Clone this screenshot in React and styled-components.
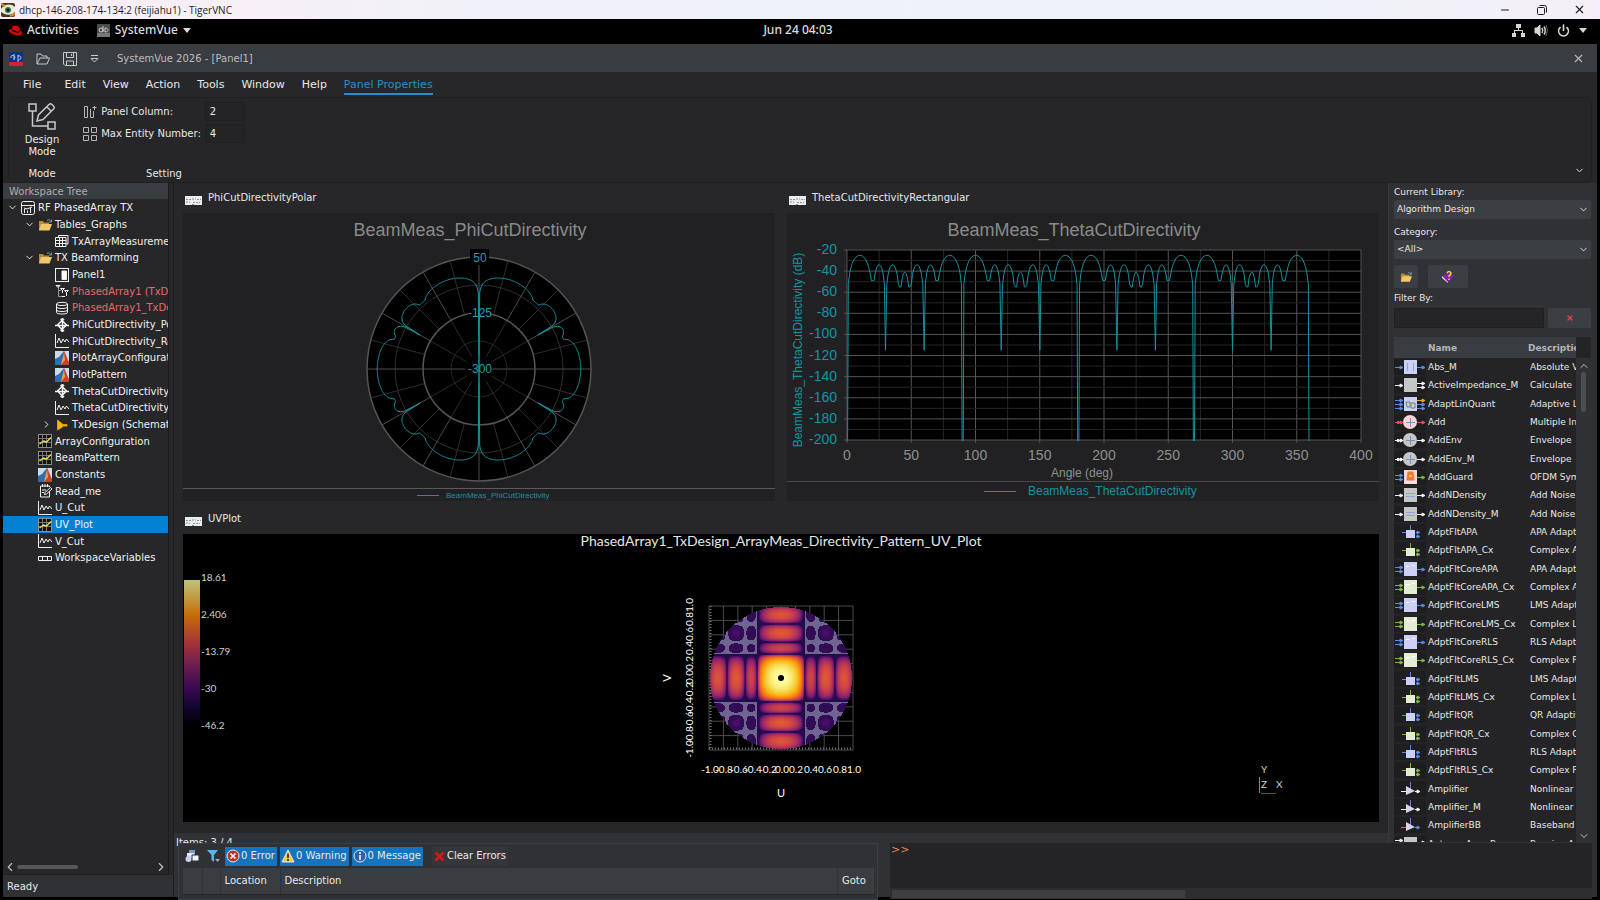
import React, { useState } from 'react';
import styled, { createGlobalStyle } from 'styled-components';
import { ChevronDown, ChevronLeft, ChevronRight, ChevronUp, Minus, Power, X } from 'lucide-react';
import { FaRedhat } from 'react-icons/fa';

const GlobalStyle = createGlobalStyle`
  * { box-sizing: border-box; }
  html, body, #root { height: 100%; margin: 0; }
  body {
    background: #000;
    color: #e8e8e8;
    font: 10px/16px "DejaVu Sans", sans-serif;
    overflow: hidden;
  }
  button, input, select { font: inherit; color: inherit; margin: 0; }
  button { border: 0; background: none; padding: 0; }
  svg { display: block; flex: none; }
`;

const Screen = styled.div`
  height: 100vh;
  display: flex;
  flex-direction: column;
`;

/* ---------- VNC and desktop bars ---------- */

const VncBar = styled.header`
  height: 19px;
  flex: none;
  display: flex;
  align-items: center;
  gap: 4px;
  padding: 0 14px 0 1px;
  color: #1c1c1c;
  background: linear-gradient(90deg, #fbeef4, #f1f1f9 30%, #eef3f9 75%, #f4eff8);
  font: 10px/16px "Open Sans", sans-serif;
`;

const VncButtons = styled.div`
  margin-left: auto;
  display: flex;
  gap: 25px;
`;

const GnomeBar = styled.nav`
  height: 25px;
  flex: none;
  display: grid;
  grid-template-columns: 1fr auto 1fr;
  align-items: center;
  padding: 0 13px 3px 9px;
  color: #dcdcdc;
  font: 500 12px/18px "Noto Sans", sans-serif;
`;

const GnomeGroup = styled.div`
  display: flex;
  align-items: center;
  justify-content: ${(p) => (p.$end ? 'flex-end' : 'flex-start')};
  gap: ${(p) => (p.$end ? '9px' : '18px')};
`;

const GnomeItem = styled.button`
  display: flex;
  align-items: center;
  gap: 5px;
`;

/* ---------- Application window ---------- */

const AppWindow = styled.div`
  flex: 1;
  min-height: 0;
  margin: 0 3px 3px;
  display: flex;
  flex-direction: column;
  background: #272729;
`;

const TitleBar = styled.div`
  height: 28px;
  flex: none;
  display: flex;
  align-items: center;
  padding: 1px 12px 0 6px;
  background: #393c40;
  color: #bcbec0;
`;

const QuickTools = styled.div`
  display: flex;
  align-items: center;
  gap: 13px;
  margin-right: 18px;
`;

const AppTitle = styled.div`
  flex: 1;
`;

const MenuBar = styled.nav`
  height: 25px;
  flex: none;
  display: flex;
  align-items: flex-start;
  gap: 17px;
  padding: 4px 20px 0;
  font-size: 11px;
`;

const MenuItem = styled.button`
  height: 19px;
  padding-right: ${(p) => (p.$wide ? '6px' : '0')};
  color: ${(p) => (p.$active ? '#2a8cc8' : '#e8e8e8')};
  border-bottom: 2px solid ${(p) => (p.$active ? '#2a8cc8' : 'transparent')};
`;

const Ribbon = styled.section`
  height: 86px;
  flex: none;
  margin: 0 5px;
  display: flex;
  align-items: stretch;
  border: 1px solid #202022;
  border-radius: 6px;
  background: #262628;
`;

const RibbonGroup = styled.div`
  display: flex;
  flex-direction: column;
  align-items: center;
  padding: 4px 0 0;
  width: ${(p) => p.$w}px;
`;

const RibbonLabel = styled.div`
  margin-top: auto;
`;

const DesignButton = styled.button`
  display: flex;
  flex-direction: column;
  align-items: center;
  gap: 4px;
  line-height: 12px;
`;

const Fields = styled.div`
  display: grid;
  grid-template-columns: 14px auto 40px;
  align-items: center;
  column-gap: 4px;
  row-gap: 3px;
`;

const FieldInput = styled.input`
  width: 40px;
  height: 19px;
  padding: 0 4px;
  background: #242426;
  border: 1px solid #202022;
  border-radius: 2px;
`;

const RibbonEnd = styled.button`
  margin: auto 6px 6px auto;
`;

const Body = styled.div`
  flex: 1;
  min-height: 0;
  display: flex;
`;

/* ---------- Workspace tree ---------- */

const LeftColumn = styled.aside`
  width: 170px;
  flex: none;
  display: flex;
  flex-direction: column;
`;

const Dock = styled.div`
  flex: 1;
  min-height: 0;
  width: 166px;
  overflow: hidden;
  display: flex;
  flex-direction: column;
  border-right: 1px solid #1d1d1f;
  border-bottom: 1px solid #1d1d1f;
`;

const DockHeader = styled.h2`
  height: 16px;
  margin: 0;
  padding-left: 6px;
  background: #393c40;
  color: #acaeb0;
  font: 10px/17px "DejaVu Sans", sans-serif;
`;

const Tree = styled.ul`
  flex: 1;
  margin: 0;
  padding: 0;
  list-style: none;
`;

const TreeRow = styled.li`
  height: 17px;
  display: flex;
  align-items: center;
  padding-left: ${(p) => 1 + p.$level * 17}px;
  white-space: nowrap;
  line-height: 17px;
  color: ${(p) => (p.$error ? '#e86a70' : '#f0f0f0')};
  background: ${(p) => (p.$selected ? '#0480d4' : 'transparent')};

  &:nth-child(3n) { height: 16px; }
`;

const Twisty = styled.span`
  width: 17px;
  flex: none;
  display: flex;
  justify-content: center;
`;

const TreeLabel = styled.span`
  padding-left: 3px;
`;

const HScroll = styled.div`
  height: 14px;
  display: flex;
  align-items: center;
  color: #c0c0c0;
`;

const HThumb = styled.div`
  width: 61px;
  height: 4px;
  margin-right: auto;
  border-radius: 2px;
  background: #55575a;
`;

const Ready = styled.div`
  height: 22px;
  flex: none;
  padding-left: 4px;
  line-height: 24px;
  background: #2f3135;
`;

/* ---------- Panel area ---------- */

const Center = styled.main`
  flex: 1;
  min-width: 0;
  display: flex;
  flex-direction: column;
  border-left: 1px solid #1f1f21;
`;

const PanelGrid = styled.div`
  display: grid;
  grid-template-columns: 1fr 1fr;
  column-gap: 12px;
  row-gap: 3px;
  padding: 0 9px 11px 9px;
`;

const Panel = styled.section`
  grid-column: ${(p) => (p.$wide ? '1 / -1' : 'auto')};
  min-width: 0;
`;

const PanelTitle = styled.h3`
  height: 30px;
  margin: 0;
  display: flex;
  align-items: flex-start;
  gap: 6px;
  padding: 7px 0 0 2px;
  font: 10px/16px "DejaVu Sans", sans-serif;

  > svg { margin-top: 6px; }
`;

const Plot = styled.svg`
  width: 100%;
  height: 288px;
  background: ${(p) => (p.$black ? '#000' : '#212123')};
  font-family: ${(p) => (p.$black ? 'Lato' : '"Liberation Sans"')}, sans-serif;
`;

const Items = styled.div`
  flex: 1;
  padding-left: 2px;
  line-height: 20px;
  background: #2f3135;
`;

/* ---------- Part library ---------- */

const Library = styled.aside`
  width: 209px;
  flex: none;
  display: flex;
  flex-direction: column;
  padding: 2px 6px 55px 5px;
  border-left: 1px solid #37393d;
  background: #2f3135;
  font-size: 9px;
`;

const SelectField = styled.label`
  display: block;
  height: 40px;
  line-height: 15px;
`;

const SelectWrap = styled.span`
  display: grid;
  align-items: center;
  height: 19px;
  background: #3b3e42;
  border-radius: 2px;

  > * { grid-area: 1 / 1; }
  > svg { justify-self: end; margin-right: 2px; pointer-events: none; }
`;

const Select = styled.select`
  appearance: none;
  width: 100%;
  height: 19px;
  padding: 0 3px;
  border: 0;
  background: transparent;
`;

const ButtonRow = styled.div`
  display: flex;
  gap: ${(p) => p.$gap}px;
`;

const LibButton = styled.button`
  width: ${(p) => p.$w}px;
  height: ${(p) => p.$h}px;
  display: flex;
  align-items: center;
  justify-content: center;
  border-radius: 2px;
  background: #3b3e42;
`;

const FilterLabel = styled.label`
  height: 20px;
  line-height: 21px;
`;

const FilterInput = styled.input`
  flex: 1;
  min-width: 0;
  height: 20px;
  background: #252527;
  border: 1px solid #1f1f21;
`;

const ListBox = styled.div`
  flex: 1;
  min-height: 0;
  margin-top: 9px;
  display: flex;
  background: #242426;
`;

const ListClip = styled.div`
  flex: 1;
  overflow: hidden;
`;

const PartTable = styled.table`
  width: 100%;
  table-layout: fixed;
  border-collapse: collapse;

  th {
    height: 21px;
    padding: 0;
    background: #393c40;
    color: #b4b6b8;
    text-align: left;
    white-space: nowrap;
    overflow: hidden;
  }
  td {
    height: 18px;
    padding: 0;
    line-height: 18px;
    white-space: nowrap;
    overflow: hidden;
  }
  tr:nth-child(3n) td { height: 19px; }
  td:nth-child(3) { padding-left: 2px; }
`;

const IconCol = styled.col`
  width: 34px;
`;

const NameCol = styled.col`
  width: 100px;
`;

const VScroll = styled.div`
  width: 15px;
  margin-top: 21px;
  display: flex;
  flex-direction: column;
  align-items: center;
  justify-content: space-between;
  padding-top: 2px;
  background: #2f3135;
  color: #c0c0c0;
`;

const VThumb = styled.div`
  width: 5px;
  height: 40px;
  margin-bottom: auto;
  border-radius: 2px;
  background: #4c4e52;
`;

/* ---------- Floating error and console windows ---------- */

const ErrorWindow = styled.section`
  position: absolute;
  left: 178px;
  right: 722px;
  bottom: 0;
  height: 57px;
  padding: 0 2px 0 4px;
  border: 1px solid #3b3e42;
  background: #2f3135;
`;

const ErrorTools = styled.div`
  height: 24px;
  display: flex;
  align-items: center;
  gap: 3px;
`;

const ToolIcon = styled.button`
  width: 18px;
  height: 18px;
  display: flex;
  align-items: center;
  justify-content: center;
`;

const CountButton = styled.button`
  height: 19px;
  display: flex;
  align-items: center;
  gap: 1px;
  padding: 0 2px 0 1px;
  white-space: nowrap;
  background: ${(p) => (p.$flat ? '#35363a' : '#1673bd')};
  margin-left: ${(p) => (p.$flat ? '6px' : '0')};
`;

const ErrorTable = styled.table`
  width: 100%;
  table-layout: fixed;
  border-collapse: collapse;

  th {
    height: 26px;
    padding: 0 4px;
    border-right: 1px solid #303236;
    border-bottom: 1px solid #252527;
    background: #393c40;
    font-weight: 400;
    text-align: left;
  }
`;

const SizedCol = styled.col`
  width: ${(p) => p.$w}px;
`;

const Console = styled.section`
  position: absolute;
  left: 890px;
  right: 8px;
  bottom: 1px;
  height: 56px;
  display: flex;
  flex-direction: column;
  background: #242426;
`;

const Prompt = styled.div`
  flex: 1;
  color: #e8805a;
  padding-left: 1px;
  font-size: 11px;
  line-height: 14px;
`;

const ConsoleScroll = styled.div`
  height: 11px;
  padding: 2px;
  background: #2d2d2f;
`;

const ConsoleThumb = styled.div`
  width: 42%;
  height: 8px;
  background: #3f3f42;
`;

/* ---------- Icons ---------- */

const FolderIcon = ({ size = 14 }) => (
  <svg width={size} height={size} viewBox="0 0 14 14">
    <path d="M1 3h4l1 1.500h5V12H1z" fill="#b98a32" />
    <path d="M3 6h11l-2.500 6.500H1z" fill="#f0c86c" />
    <path d="M9 2.500c2-1.500 3-.5 3.500 1M13.500 1.500v2.500h-2.500" stroke="#7d96b4" fill="none" />
  </svg>
);

const TreeIcon = ({ kind }) => {
  if (kind === 'folder') return <FolderIcon />;
  return (
    <svg width="14" height="14" viewBox="0 0 14 14" fill="none" stroke="#f0f0f0">
      {kind === 'root' && (
        <>
          <rect x=".5" y=".5" width="13" height="13" rx="2" />
          <path d="M1 4.500h12M3.500 12V8M6.500 12V9.500M9.500 12V7M3 7l3 1 5-2" />
        </>
      )}
      {kind === 'table' && (
        <>
          <path d="M3.500 3V1.500h9.500v8.500h-1.500" />
          <path d="M.5 3.500h10.500v9H.5zM1 6.500h10.500M1 9.500h10.500M4.500 3.500v9M7.500 3.500v9" />
        </>
      )}
      {kind === 'panel' && (
        <>
          <rect x=".5" y=".5" width="13" height="13" />
          <path d="M7 3h4.500v8.500H7z" fill="#fff" />
        </>
      )}
      {kind === 'analysis' && (
        <>
          <path d="M1 1.500h4M3.500 1.500v11h4M3 6.500h3" stroke="#9a9a9a" />
          <path d="M1 1.500h4l-2 2zM5.500 4.500h4l-2 2zM9.500 6.500h4l-2 2zM7.500 6v3M11.500 8v4M7 12.500h3" />
        </>
      )}
      {kind === 'data' && (
        <path d="M1.500 3C1.500 .8 12.500 .8 12.500 3v8.500c0 2-11 2-11 0zM1.500 3c0 2 11 2 11 0M1.500 6c0 2 11 2 11 0M1.500 9c0 2 11 2 11 0" />
      )}
      {kind === 'polar' && (
        <path d="M7 2.500L11.500 7 7 11.500 2.500 7zM7.500 0v14M0 7.500h14M5.500 2L7.500 .5 9 2M5.500 12l2 1.500L9 12" strokeWidth="1.500" />
      )}
      {kind === 'graph' && (
        <path d="M.5 0v13.500H14M2 9l2-5 2 5 2-4 2 3 1.500-3L14 8" />
      )}
      {kind === 'matlab' && (
        <g stroke="none">
          <path d="M0 0h14v14H0z" fill="#c9dcec" />
          <path d="M0 8l4-2 5-6 2 8-4 6H0z" fill="#2f6fae" />
          <path d="M9 0c2 3 3 8 5 11v3H6c1-2 2-8 3-14z" fill="#c6442a" />
          <path d="M9 1l1 8-4 5c1-5 2-8 3-13z" fill="#ef9a52" />
        </g>
      )}
      {kind === 'design' && (
        <path d="M2.500 2v10l5-3V8H12V6.500H8z" fill="#f4b41a" stroke="#e0a000" />
      )}
      {kind === 'uv' && (
        <>
          <rect x=".5" y=".5" width="13" height="13" fill="#111" stroke="#8c8c8c" />
          <path d="M4.500 1v12M8.500 1v12M1 4.500h12M1 8.500h12" stroke="#777" />
          <path d="M1.500 10l4-3 3 1L13 3.500" stroke="#e6e04a" strokeWidth="1.500" />
        </>
      )}
      {kind === 'note' && (
        <>
          <path d="M11.500 7v6H2.500V2h9v1M4.500 0v3M7 0v3M9.500 0v3M4 6h4M4 8.500h2" />
          <path d="M6.500 10.500l.5-2 5.500-5 1.500 1.500-5.500 5z" />
        </>
      )}
      {kind === 'vars' && <path d="M.5 5.500h13v4H.5zM4.500 5v4M9.500 5v4" />}
    </svg>
  );
};

const PanelIcon = () => (
  <svg width="17" height="9" viewBox="0 0 17 9">
    <path d="M0 0h17v9H9l-1-1-1 1H0z" fill="#e9edf0" />
    <path d="M1 3.500h5M7 3h4M12 3.500h4M1 6h4M8 6.500h7" stroke="#8a949c" strokeDasharray="2 1" />
  </svg>
);

const COLORS = { b: '#5a8ae0', w: '#f0f0f0', r: '#e05252', g: '#7fb24a', y: '#d8b020', p: '#7d78c8' };
const FILLS = { b: '#ccd0f8', w: '#c4c6c8', r: '#f8d4d8', g: '#e4ecd4', p: '#d8d4ea' };

const Arrow = ({ x, y, len, color }) => (
  <path
    d={`M${x} ${y}h${len}M${x + len - 3} ${y - 1.5}l3 1.500-3 1.500z`}
    stroke={COLORS[color]}
    fill={COLORS[color]}
  />
);

const Glyph = ({ mark }) => (
  <g fill="none" stroke="#8fa4dc">
    {mark === 'abs' && <path d="M13.500 4v8M19.500 4v8" />}
    {mark === 'noise' && <path d="M12 6.500h9M12 9.500h9" />}
    {mark === 'quant' && <path d="M12 6h4v5h-3zM17 7h4v5h-4z" stroke="#6c8a50" />}
    {mark === 'core' && <path d="M12 5.500h4M18 4.500h3" stroke="#fff" />}
    {mark === 'guard' && (
      <>
        <path d="M14 3h5l1 8h-7z" fill="#ee7a2c" stroke="#ee7a2c" />
        <path d="M13 13h8M15 7h3" stroke="#fff" />
      </>
    )}
  </g>
);

const PartIcon = ({ shape, tone, ins = 1, out = tone, outs = 1, mark }) => {
  const spread = (n, i) => 8.5 + (i - (n - 1) / 2) * 4;
  return (
    <svg width="32" height="16" viewBox="0 0 32 16">
      <path d="M0 0h32v16H0z" fill="#1e1e20" />
      {shape === 'adapt' && (
        <g>
          <path d="M16.500 1v5M8 8.500h4" stroke={COLORS[tone]} />
          <rect x="12" y="6" width="9" height="8" fill={FILLS[tone]} />
          <Arrow x={22} y={8.5} len={4} color={tone} />
          <Arrow x={22} y={12.5} len={4} color={tone} />
        </g>
      )}
      {shape === 'amp' && (
        <g>
          <path d="M16.500 1v7" stroke={COLORS.p} />
          <path d="M7 10.500h5" stroke={COLORS[tone]} />
          <path d="M12 5l9 5-9 4z" fill={FILLS.p} />
          <Arrow x={21} y={10.5} len={5} color={tone} />
        </g>
      )}
      {(shape === 'box' || shape === 'sum') && (
        <g>
          {Array.from({ length: ins }, (_, i) => (
            <Arrow key={i} x={1} y={spread(ins, i)} len={8} color={tone} />
          ))}
          {Array.from({ length: outs }, (_, i) => (
            <Arrow key={i} x={23} y={spread(outs, i)} len={8} color={i === 0 ? out : tone} />
          ))}
          {shape === 'box' ? (
            <>
              <rect x="10" y="1" width="13" height="14" fill={FILLS[mark === 'guard' ? 'r' : tone]} />
              <Glyph mark={mark} />
            </>
          ) : (
            <>
              <path d="M3 8.500h5" stroke={COLORS[tone]} strokeWidth="3" strokeDasharray="2 1" />
              <circle cx="16" cy="8" r="7" fill={FILLS[tone]} />
              <path d="M16.500 4v9M12 8.500h9" stroke="#7a90c0" />
            </>
          )}
        </g>
      )}
    </svg>
  );
};

/* ---------- Data ---------- */

const TREE = [
  ['RF PhasedArray TX', 0, 'root', 'open'],
  ['Tables_Graphs', 1, 'folder', 'open'],
  ['TxArrayMeasurements', 2, 'table'],
  ['TX Beamforming', 1, 'folder', 'open'],
  ['Panel1', 2, 'panel'],
  ['PhasedArray1 (TxDesign)', 2, 'analysis', '', true],
  ['PhasedArray1_TxDesign', 2, 'data', '', true],
  ['PhiCutDirectivity_Polar', 2, 'polar'],
  ['PhiCutDirectivity_Rect', 2, 'graph'],
  ['PlotArrayConfiguration', 2, 'matlab'],
  ['PlotPattern', 2, 'matlab'],
  ['ThetaCutDirectivity_Polar', 2, 'polar'],
  ['ThetaCutDirectivity_Rect', 2, 'graph'],
  ['TxDesign (Schematic)', 2, 'design', 'closed'],
  ['ArrayConfiguration', 1, 'uv'],
  ['BeamPattern', 1, 'uv'],
  ['Constants', 1, 'matlab'],
  ['Read_me', 1, 'note'],
  ['U_Cut', 1, 'graph'],
  ['UV_Plot', 1, 'uv'],
  ['V_Cut', 1, 'graph'],
  ['WorkspaceVariables', 1, 'vars'],
];

const CORE_B = { shape: 'box', tone: 'b', ins: 2, mark: 'core' };
const CORE_G = { shape: 'box', tone: 'g', ins: 2, mark: 'core' };

const PARTS = [
  ['Abs_M', 'Absolute Value', { shape: 'box', tone: 'b', mark: 'abs' }],
  ['ActiveImpedance_M', 'Calculate', { shape: 'box', tone: 'w', outs: 2 }],
  ['AdaptLinQuant', 'Adaptive Linear', { shape: 'box', tone: 'b', ins: 3, out: 'y', outs: 3, mark: 'quant' }],
  ['Add', 'Multiple Input', { shape: 'sum', tone: 'r' }],
  ['AddEnv', 'Envelope', { shape: 'sum', tone: 'w' }],
  ['AddEnv_M', 'Envelope', { shape: 'sum', tone: 'w' }],
  ['AddGuard', 'OFDM Symbol', { shape: 'box', tone: 'b', ins: 2, out: 'g', mark: 'guard' }],
  ['AddNDensity', 'Add Noise', { shape: 'box', tone: 'w', mark: 'noise' }],
  ['AddNDensity_M', 'Add Noise', { shape: 'box', tone: 'w', mark: 'noise' }],
  ['AdptFltAPA', 'APA Adaptive', { shape: 'adapt', tone: 'b' }],
  ['AdptFltAPA_Cx', 'Complex APA', { shape: 'adapt', tone: 'g' }],
  ['AdptFltCoreAPA', 'APA Adaptive', CORE_B],
  ['AdptFltCoreAPA_Cx', 'Complex APA', CORE_G],
  ['AdptFltCoreLMS', 'LMS Adaptive', CORE_B],
  ['AdptFltCoreLMS_Cx', 'Complex LMS', CORE_G],
  ['AdptFltCoreRLS', 'RLS Adaptive', CORE_B],
  ['AdptFltCoreRLS_Cx', 'Complex RLS', CORE_G],
  ['AdptFltLMS', 'LMS Adaptive', { shape: 'adapt', tone: 'b' }],
  ['AdptFltLMS_Cx', 'Complex LMS', { shape: 'adapt', tone: 'g' }],
  ['AdptFltQR', 'QR Adaptive', { shape: 'adapt', tone: 'b' }],
  ['AdptFltQR_Cx', 'Complex QR', { shape: 'adapt', tone: 'g' }],
  ['AdptFltRLS', 'RLS Adaptive', { shape: 'adapt', tone: 'b' }],
  ['AdptFltRLS_Cx', 'Complex RLS', { shape: 'adapt', tone: 'g' }],
  ['Amplifier', 'Nonlinear', { shape: 'amp', tone: 'w' }],
  ['Amplifier_M', 'Nonlinear', { shape: 'amp', tone: 'w' }],
  ['AmplifierBB', 'Baseband', { shape: 'amp', tone: 'b' }],
  ['AntennaArrayRx', 'Receive Array', { shape: 'box', tone: 'w', ins: 3, outs: 2 }],
];

/* ---------- Charts ---------- */

// lobes: [start, end, peak, floor at start, floor at end]
const lobeValue = (lobes, a, k) => {
  const lobe = lobes.find((l) => a >= l[0] && a <= l[1]);
  const [from, to, peak, floorA, floorB] = lobe;
  const t = (a - from) / (to - from);
  const s = Math.sin(Math.PI * t);
  const floor = t < 0.5 ? floorA : floorB;
  return s < 0.001 ? floor : Math.max(floor, peak + k * Math.log10(s));
};

const TEAL = '#1593a0';

const POLAR_LOBES = [
  [0, 42, -5, -300, -27],
  [42, 60, -4, -27, -88],
  [60, 70, -10, -88, -20],
  [70, 110, 18, -20, -20],
];

const polarPath = () => {
  const pts = [];
  for (let a = 0; a <= 360; a += 0.5) {
    let q = a % 180;
    if (q > 110) q = 180 - q;
    const r = (112 * (lobeValue(POLAR_LOBES, q, q < 42 ? 40 : 30) + 300)) / 350;
    const rad = (a * Math.PI) / 180;
    pts.push(`${(296 + r * Math.sin(rad)).toFixed(1)} ${(156 - r * Math.cos(rad)).toFixed(1)}`);
  }
  return `M${pts.join('L')}`;
};

const spoke = (deg, r1, r2) => {
  const s = Math.sin((deg * Math.PI) / 180);
  const c = Math.cos((deg * Math.PI) / 180);
  return `M${296 + r1 * s} ${156 - r1 * c}L${296 + r2 * s} ${156 - r2 * c}`;
};

const PolarPlot = () => (
  <Plot viewBox="0 0 592 288" role="img" aria-label="BeamMeas_PhiCutDirectivity">
    <text x="287" y="23" fontSize="18" textAnchor="middle" fill="#8a8a8a">BeamMeas_PhiCutDirectivity</text>
    <circle cx="296" cy="156" r="112" fill="#000" stroke="#555" strokeWidth="1.500" />
    <g fill="none">
      <circle cx="296" cy="156" r="28" stroke="#262626" />
      <circle cx="296" cy="156" r="84" stroke="#303030" />
      {Array.from({ length: 12 }, (_, i) => (
        <path key={i} d={spoke(i * 30 + 15, 56, 112)} stroke="#2e2e2e" />
      ))}
      {Array.from({ length: 12 }, (_, i) => (
        <path key={i} d={spoke(i * 30, 14, 56)} stroke={i % 3 ? '#2a2a2a' : '#4c4c4c'} />
      ))}
      {Array.from({ length: 12 }, (_, i) => (
        <path key={i} d={spoke(i * 30, 56, 112)} stroke="#4c4c4c" />
      ))}
      <circle cx="296" cy="156" r="56" stroke="#555" strokeWidth="1.500" />
    </g>
    <path d="M287 36h19v16h-19zM285 93h22v12h-22zM284 149h24v14h-24z" fill="#000" />
    <path d={polarPath()} fill="none" stroke={TEAL} />
    <g fontSize="12" textAnchor="middle" fill="#1a9fb0">
      <text x="297" y="49">50</text>
      <text x="297" y="104">-125</text>
      <text x="297" y="160">-300</text>
    </g>
    <path d="M0 275.500h592" stroke="#5a5a5a" />
    <path d="M234 282.500h22" stroke={TEAL} />
    <text x="263" y="285" fontSize="8" fill={TEAL}>BeamMeas_PhiCutDirectivity</text>
  </Plot>
);

const THETA_LOBES = [
  [0, 20, -25, -330, -49],
  [20, 30, -34, -49, -115],
  [30, 41, -34, -115, -55],
  [41, 49, -41, -55, -55],
  [49, 60, -34, -55, -115],
  [60, 70, -34, -115, -49],
  [70, 90, -25, -49, -330],
];

const px = (deg) => 60 + (deg * 514) / 400;
const py = (db) => 37 + ((-20 - db) * 190) / 180;

const thetaPath = () => {
  const pts = [];
  for (let a = 0; a <= 360; a += 1) {
    pts.push(`${px(a).toFixed(1)} ${py(lobeValue(THETA_LOBES, a % 90, 34)).toFixed(1)}`);
  }
  return `M${pts.join('L')}`;
};

const ThetaPlot = () => (
  <Plot viewBox="0 0 592 288" role="img" aria-label="BeamMeas_ThetaCutDirectivity">
    <clipPath id="thetaClip"><rect x="60" y="37" width="515" height="191" /></clipPath>
    <text x="287" y="23" fontSize="18" textAnchor="middle" fill="#8a8a8a">BeamMeas_ThetaCutDirectivity</text>
    <rect x="60" y="37" width="514" height="190" />
    {Array.from({ length: 17 }, (_, i) => (
      <path key={i} d={`M${px(i * 25)} 37V${i % 2 ? 227 : 230}`} stroke={i % 2 ? '#262626' : '#545454'} />
    ))}
    {Array.from({ length: 19 }, (_, i) => (
      <path key={i} d={`M${i % 2 ? 60 : 57} ${py(-20 - i * 10)}H574`} stroke={i % 2 ? '#262626' : '#545454'} />
    ))}
    <path d={thetaPath()} clipPath="url(#thetaClip)" fill="none" stroke={TEAL} />
    <g fontSize="14" textAnchor="end" fill={TEAL}>
      {Array.from({ length: 10 }, (_, i) => (
        <text key={i} x="50" y={py(-20 - i * 20) + 4}>{-20 - i * 20}</text>
      ))}
    </g>
    <g fontSize="14" textAnchor="middle" fill="#8f8f8f">
      {Array.from({ length: 9 }, (_, i) => (
        <text key={i} x={px(i * 50)} y="247">{i * 50}</text>
      ))}
      <text x="295" y="264" fontSize="12">Angle (deg)</text>
    </g>
    <text transform="translate(15 137) rotate(-90)" fontSize="12" textAnchor="middle" fill={TEAL}>
      BeamMeas_ThetaCutDirectivity (dB)
    </text>
    <path d="M0 268.500h592" stroke="#4a4a4a" />
    <path d="M197 278.500h32" stroke={TEAL} />
    <text x="241" y="282" fontSize="12" fill={TEAL}>BeamMeas_ThetaCutDirectivity</text>
  </Plot>
);

const INFERNO = [
  [0, 0, 4], [27, 12, 65], [74, 12, 107], [120, 28, 109], [165, 44, 96],
  [207, 68, 70], [237, 105, 37], [251, 155, 6], [247, 209, 61], [252, 255, 164],
];

const inferno = (t) => {
  const p = Math.min(0.999, Math.max(0, t)) * 9;
  const i = Math.floor(p);
  return INFERNO[i].map((c, n) => Math.round(c + (INFERNO[i + 1][n] - c) * (p - i)));
};

const UV_LOBES = [
  [-0.336, 0.336, 0, -90, -90],
  [0.336, 0.505, -29, -90, -90],
  [0.505, 0.76, -25, -90, -90],
  [0.76, 1.02, -26, -90, -90],
];

// The pattern is separable, so each cell is the sum of two one-dimensional cuts.
const uvCells = () => {
  const cut = (n) => lobeValue(UV_LOBES, Math.abs(n) / 71, Math.abs(n) < 24 ? 30 : 24);
  const byColor = {};
  for (let y = -71; y < 71; y += 1) {
    for (let x = -71; x < 71; x += 1) {
      const cx = x + 0.5;
      const cy = y + 0.5;
      if (cx * cx + cy * cy > 71 * 71) continue;
      const db = 18.6 + cut(cx) + cut(cy);
      const outside = Math.abs(cx) > 24 && Math.abs(cy) > 24;
      let color = '#6f6591';
      if (!outside || db > -47) {
        const floor = outside ? 0.17 : 0.13;
        const t = Math.round(Math.max(floor, (db + 46.2) / 64.8) * 60) / 60;
        color = `rgb(${inferno(t).join(',')})`;
      }
      byColor[color] = (byColor[color] || '') + `M${x} ${y}h1v1h-1z`;
    }
  }
  return Object.entries(byColor);
};

const UV_CELLS = uvCells();
const UV_TICKS = Array.from({ length: 11 }, (_, i) => (-1 + i * 0.2).toFixed(1).replace('-0.0', '0.0'));
const tickX = (i) => -71 + Math.round(i * 14.4);

const UvPlot = () => (
  <Plot $black viewBox="0 0 1196 288" role="img" aria-label="UV plot">
    <linearGradient id="uvBar" x1="0" y1="1" x2="0" y2="0">
      <stop offset="0" stopColor="#000004" />
      <stop offset=".12" stopColor="#120632" />
      <stop offset=".25" stopColor="#3c0852" />
      <stop offset=".42" stopColor="#70204e" />
      <stop offset=".55" stopColor="#a0303a" />
      <stop offset=".76" stopColor="#c66e08" />
      <stop offset="1" stopColor="#c0c47c" />
    </linearGradient>
    <text x="598" y="12" fontSize="14" textAnchor="middle" fill="#e6e6e6">
      PhasedArray1_TxDesign_ArrayMeas_Directivity_Pattern_UV_Plot
    </text>
    <rect x="1" y="46" width="16" height="144" fill="url(#uvBar)" />
    <g fontSize="10" fill="#d0d0d0">
      {['18.61', '2.406', '-13.79', '-30', '-46.2'].map((label, i) => (
        <text key={label} x="18" y={47 + i * 37}>{label}</text>
      ))}
    </g>
    <g transform="translate(598 144)">
      {Array.from({ length: 11 }, (_, i) => (
        <path key={i} d={`M${-72 + i * 14.4} -72V72M-72 ${-72 + i * 14.4}H72`} stroke="#4a4a4a" />
      ))}
      <path d="M-72 70.500H72M-70.500 -72V72" stroke="#777" strokeWidth="2" strokeDasharray="1 2" />
      <g shapeRendering="crispEdges">
        {UV_CELLS.map(([color, d]) => <path key={color} d={d} fill={color} />)}
      </g>
      <circle r="3" fill="#000" />
      <g fontSize="10" textAnchor="middle" fill="#fff">
        {UV_TICKS.map((tick, i) => (
          <text key={tick} x={tickX(i)} y="95">{tick}</text>
        ))}
        <text y="119" fontSize="11">U</text>
        <g transform="rotate(-90)">
          {UV_TICKS.map((tick, i) => (
            <text key={tick} x={tickX(i)} y="-88">{tick}</text>
          ))}
          <text y="-110" fontSize="11">V</text>
        </g>
      </g>
    </g>
    <path d="M1076.500 259v-16" stroke="#2fc42f" />
    <path d="M1078 259.500h15" stroke="#d81818" />
    <g fontSize="10" fill="#d0d0d0">
      <text x="1078" y="239">Y</text>
      <text x="1078" y="254">Z</text>
      <text x="1093" y="254">X</text>
    </g>
  </Plot>
);

/* ---------- Page ---------- */

const MENUS = ['File', 'Edit', 'View', 'Action', 'Tools', 'Window', 'Help', 'Panel Properties'];

const App = () => {
  const [columns, setColumns] = useState('2');
  const [maxItems, setMaxItems] = useState('4');
  const [filter, setFilter] = useState('');

  return (
    <Screen>
      <GlobalStyle />
      <VncBar>
        <svg width="14" height="14" viewBox="0 0 14 14">
          <rect width="14" height="14" rx="2" fill="#4a3522" />
          <path d="M0 6c3-5 10-6 14-2v5c-4 4-10 3-14 0z" fill="#e8ead8" />
          <circle cx="7" cy="7" r="3" fill="#2f7a44" />
          <circle cx="7" cy="7" r="1.500" fill="#111" />
          <path d="M0 1l4 2M14 11l-5 2" stroke="#e08a2a" strokeWidth="2" />
        </svg>
        dhcp-146-208-174-134:2 (feijiahu1) - TigerVNC
        <VncButtons>
          <button aria-label="Minimize"><Minus size={12} strokeWidth={2} /></button>
          <button aria-label="Restore">
            <svg width="12" height="12" viewBox="0 0 12 12" fill="none" stroke="#1c1c1c">
              <rect x="1.500" y="3.500" width="7" height="7" rx="1" />
              <path d="M3.500 1.500h5a2 2 0 0 1 2 2v5" />
            </svg>
          </button>
          <button aria-label="Close"><X size={13} strokeWidth={2} /></button>
        </VncButtons>
      </VncBar>

      <GnomeBar>
        <GnomeGroup>
          <GnomeItem><FaRedhat size={13} color="#e00000" />Activities</GnomeItem>
          <GnomeItem>
            <svg width="13" height="13" viewBox="0 0 13 13">
              <rect width="13" height="13" fill="#4c4c4c" />
              <path d="M0 9h13v4H0z" fill="#777" />
              <path d="M2 6a2 2 0 1 1 4 0 2 2 0 1 1-4 0M6 2v6M8 8V4c4 0 4 4 0 4" stroke="#ccc" fill="none" />
            </svg>
            SystemVue
            <svg width="8" height="5" viewBox="0 0 8 5"><path d="M0 0h8L4 5z" fill="#dcdcdc" /></svg>
          </GnomeItem>
        </GnomeGroup>
        <div>Jun 24 04:03</div>
        <GnomeGroup $end>
          <svg width="13" height="13" viewBox="0 0 13 13" fill="#d6d6d6">
            <path d="M4 0h5v4H7v2h4v3h2v4H9V9h1V7H3v2h1v4H0V9h2V6h4V4H4z" />
          </svg>
          <svg width="14" height="13" viewBox="0 0 14 13" fill="none" stroke="#d6d6d6">
            <path d="M1 4h2l3-3v11L3 9H1z" fill="#d6d6d6" />
            <path d="M8 4q1.500 2.500 0 5M10 2.500q2.500 4 0 8" strokeWidth="1.500" />
            <path d="M12 1q3 5.500 0 11" stroke="#666" />
          </svg>
          <Power size={13} strokeWidth={3} />
          <svg width="8" height="5" viewBox="0 0 8 5"><path d="M0 0h8L4 5z" fill="#d6d6d6" /></svg>
        </GnomeGroup>
      </GnomeBar>

      <AppWindow>
        <TitleBar>
          <QuickTools>
            <svg width="14" height="14" viewBox="0 0 14 14">
              <rect width="14" height="10" fill="#12327c" />
              <path d="M0 10h14v4H0z" fill="#d3203a" />
              <path d="M5 2v6M9 3v7M2 6a2 2 0 1 1 3 1M9 4c4-1 4 4 0 4" stroke="#9fd4f4" fill="none" />
            </svg>
            <button aria-label="Open">
              <svg width="14" height="12" viewBox="0 0 14 12" fill="none" stroke="#c8cacc">
                <path d="M1 11V1h4l1.500 2H11v2M1 11l3-6h9.500L11 11z" />
              </svg>
            </button>
            <button aria-label="Save">
              <svg width="14" height="14" viewBox="0 0 14 14" fill="none" stroke="#c8cacc">
                <path d="M.5 .5h13v13H2L.5 12zM3.500 .5v5h7v-5M3.500 13.500V9h7v4.500M8.500 2v2" />
              </svg>
            </button>
            <button aria-label="More">
              <svg width="9" height="8" viewBox="0 0 9 8" fill="none" stroke="#c8cacc">
                <path d="M1 .5h7M1 3.500h7L4.500 7z" />
              </svg>
            </button>
          </QuickTools>
          <AppTitle>SystemVue 2026 - [Panel1]</AppTitle>
          <button aria-label="Close panel"><X size={13} strokeWidth={2} /></button>
        </TitleBar>

        <MenuBar>
          {MENUS.map((m) => (
            <MenuItem key={m} $wide={m === 'File'} $active={m === 'Panel Properties'}>{m}</MenuItem>
          ))}
        </MenuBar>

        <Ribbon>
          <RibbonGroup $w={66}>
            <DesignButton>
              <svg width="28" height="28" viewBox="0 0 28 28" fill="none" stroke="#c8c8c8" strokeWidth="1.500">
                <path d="M1 2h7v7H1zM20 20h7v7h-7zM4.500 9v15H20" />
                <path d="M9 19l1.500-6L21 2.500q1.500-1.500 3 0l1.500 1.500q1.500 1.500 0 3L15 17.500zM19 5l4 4" />
              </svg>
              <span>Design<br />Mode</span>
            </DesignButton>
            <RibbonLabel>Mode</RibbonLabel>
          </RibbonGroup>
          <RibbonGroup $w={178}>
            <Fields>
              <svg width="14" height="14" viewBox="0 0 14 14" fill="none" stroke="#b8b8b8">
                <path d="M4.500 1.500H1.500v11h3zM7.500 4v8.500h3V6M11.500 1v4M9.500 2.500h4" />
              </svg>
              <label htmlFor="cols">Panel Column:</label>
              <FieldInput id="cols" value={columns} onChange={(e) => setColumns(e.target.value)} />
              <svg width="14" height="14" viewBox="0 0 14 14" fill="none" stroke="#b8b8b8">
                <path d="M.5 .5h5v5h-5zM8.500 .5h5v5h-5zM.5 8.500h5v5h-5zM8.500 8.500h5v5h-5z" />
              </svg>
              <label htmlFor="max">Max Entity Number:</label>
              <FieldInput id="max" value={maxItems} onChange={(e) => setMaxItems(e.target.value)} />
            </Fields>
            <RibbonLabel>Setting</RibbonLabel>
          </RibbonGroup>
          <RibbonEnd aria-label="Collapse ribbon"><ChevronDown size={11} /></RibbonEnd>
        </Ribbon>

        <Body>
          <LeftColumn>
            <Dock>
              <DockHeader>Workspace Tree</DockHeader>
              <Tree>
                {TREE.map(([label, level, kind, state, error]) => (
                  <TreeRow key={label} $level={level} $error={error} $selected={label === 'UV_Plot'}>
                    <Twisty>
                      {state === 'open' && <ChevronDown size={11} />}
                      {state === 'closed' && <ChevronRight size={11} />}
                    </Twisty>
                    <TreeIcon kind={kind} />
                    <TreeLabel>{label}</TreeLabel>
                  </TreeRow>
                ))}
              </Tree>
              <HScroll>
                <ChevronLeft size={14} strokeWidth={2} />
                <HThumb />
                <ChevronRight size={14} strokeWidth={2} />
              </HScroll>
            </Dock>
            <Ready>Ready</Ready>
          </LeftColumn>

          <Center>
            <PanelGrid>
              <Panel>
                <PanelTitle><PanelIcon />PhiCutDirectivityPolar</PanelTitle>
                <PolarPlot />
              </Panel>
              <Panel>
                <PanelTitle><PanelIcon />ThetaCutDirectivityRectangular</PanelTitle>
                <ThetaPlot />
              </Panel>
              <Panel $wide>
                <PanelTitle><PanelIcon />UVPlot</PanelTitle>
                <UvPlot />
              </Panel>
            </PanelGrid>
            <Items>Items: 3 / 4</Items>
          </Center>

          <Library>
            <SelectField>
              Current Library:
              <SelectWrap>
                <Select><option>Algorithm Design</option></Select>
                <ChevronDown size={11} />
              </SelectWrap>
            </SelectField>
            <SelectField>
              Category:
              <SelectWrap>
                <Select><option>&lt;All&gt;</option></Select>
                <ChevronDown size={11} />
              </SelectWrap>
            </SelectField>
            <ButtonRow $gap={10}>
              <LibButton $w={24} $h={23} aria-label="Open library"><FolderIcon size={12} /></LibButton>
              <LibButton $w={40} $h={23} aria-label="Library help">
                <svg width="13" height="13" viewBox="0 0 13 13">
                  <path d="M0 6l7-4 5 4-6 6z" fill="#8a1fb0" />
                  <path d="M0 6l6 6v1L0 8z" fill="#e8d8f0" />
                  <path d="M5 3q2-3 4 0 0 2-2 3v1M7 8.500v1.500" stroke="#f0d830" strokeWidth="1.500" fill="none" />
                </svg>
              </LibButton>
            </ButtonRow>
            <FilterLabel htmlFor="filter">Filter By:</FilterLabel>
            <ButtonRow $gap={4}>
              <FilterInput id="filter" value={filter} onChange={(e) => setFilter(e.target.value)} />
              <LibButton $w={43} $h={20} aria-label="Clear filter"><X size={8} strokeWidth={4} color="#e04040" /></LibButton>
            </ButtonRow>
            <ListBox>
              <ListClip>
                <PartTable>
                  <colgroup><IconCol /><NameCol /><col /></colgroup>
                  <thead>
                    <tr><th aria-label="Icon" /><th>Name</th><th>Description</th></tr>
                  </thead>
                  <tbody>
                    {PARTS.map(([name, text, icon]) => (
                      <tr key={name}>
                        <td><PartIcon {...icon} /></td>
                        <td>{name}</td>
                        <td>{text}</td>
                      </tr>
                    ))}
                  </tbody>
                </PartTable>
              </ListClip>
              <VScroll>
                <ChevronUp size={12} strokeWidth={2} />
                <VThumb />
                <ChevronDown size={12} strokeWidth={2} />
              </VScroll>
            </ListBox>
          </Library>
        </Body>
      </AppWindow>

      <ErrorWindow>
        <ErrorTools>
          <ToolIcon aria-label="Copy">
            <svg width="14" height="13" viewBox="0 0 14 13">
              <path d="M4 0h6v6H4z" fill="#7d9ad0" />
              <path d="M2 3h7v5H2z" fill="#dfe6f6" />
              <path d="M7 5h7v6H7z" fill="#eef2fa" stroke="#2f3135" />
              <circle cx="3.500" cy="9" r="3" fill="#c4d2ee" />
            </svg>
          </ToolIcon>
          <ToolIcon aria-label="Filter">
            <svg width="13" height="13" viewBox="0 0 13 13">
              <path d="M0 0h11L7 5v7L4.500 10V5z" fill="#58b8ee" />
              <path d="M8 9h5l-2.500 3z" fill="#aaa" />
            </svg>
          </ToolIcon>
          <CountButton>
            <svg width="14" height="14" viewBox="0 0 14 14">
              <circle cx="7" cy="7" r="6" fill="#b03a30" stroke="#e8e8e8" />
              <path d="M4.500 4.500l5 5M9.500 4.500l-5 5" stroke="#fff" strokeWidth="1.500" />
            </svg>
            0 Error
          </CountButton>
          <CountButton>
            <svg width="14" height="14" viewBox="0 0 14 14">
              <path d="M7 1l6 12H1z" fill="#f4c84a" stroke="#e8e8e8" />
              <path d="M7 4.500V9M7 10v2" stroke="#222" strokeWidth="1.500" />
            </svg>
            0 Warning
          </CountButton>
          <CountButton>
            <svg width="14" height="14" viewBox="0 0 14 14">
              <circle cx="7" cy="7" r="6" fill="#2f5fae" stroke="#e8e8e8" />
              <path d="M7 3v2M7 6v5" stroke="#fff" strokeWidth="1.500" />
            </svg>
            0 Message
          </CountButton>
          <CountButton $flat><X size={13} strokeWidth={5} color="#d81818" />Clear Errors</CountButton>
        </ErrorTools>
        <ErrorTable>
          <colgroup>
            <SizedCol $w={19} /><SizedCol $w={18} /><SizedCol $w={60} /><col /><SizedCol $w={37} />
          </colgroup>
          <thead>
            <tr><th aria-label="Type" /><th aria-label="Count" /><th>Location</th><th>Description</th><th>Goto</th></tr>
          </thead>
        </ErrorTable>
      </ErrorWindow>

      <Console>
        <Prompt>&gt;&gt;</Prompt>
        <ConsoleScroll><ConsoleThumb /></ConsoleScroll>
      </Console>
    </Screen>
  );
};

export default App;
